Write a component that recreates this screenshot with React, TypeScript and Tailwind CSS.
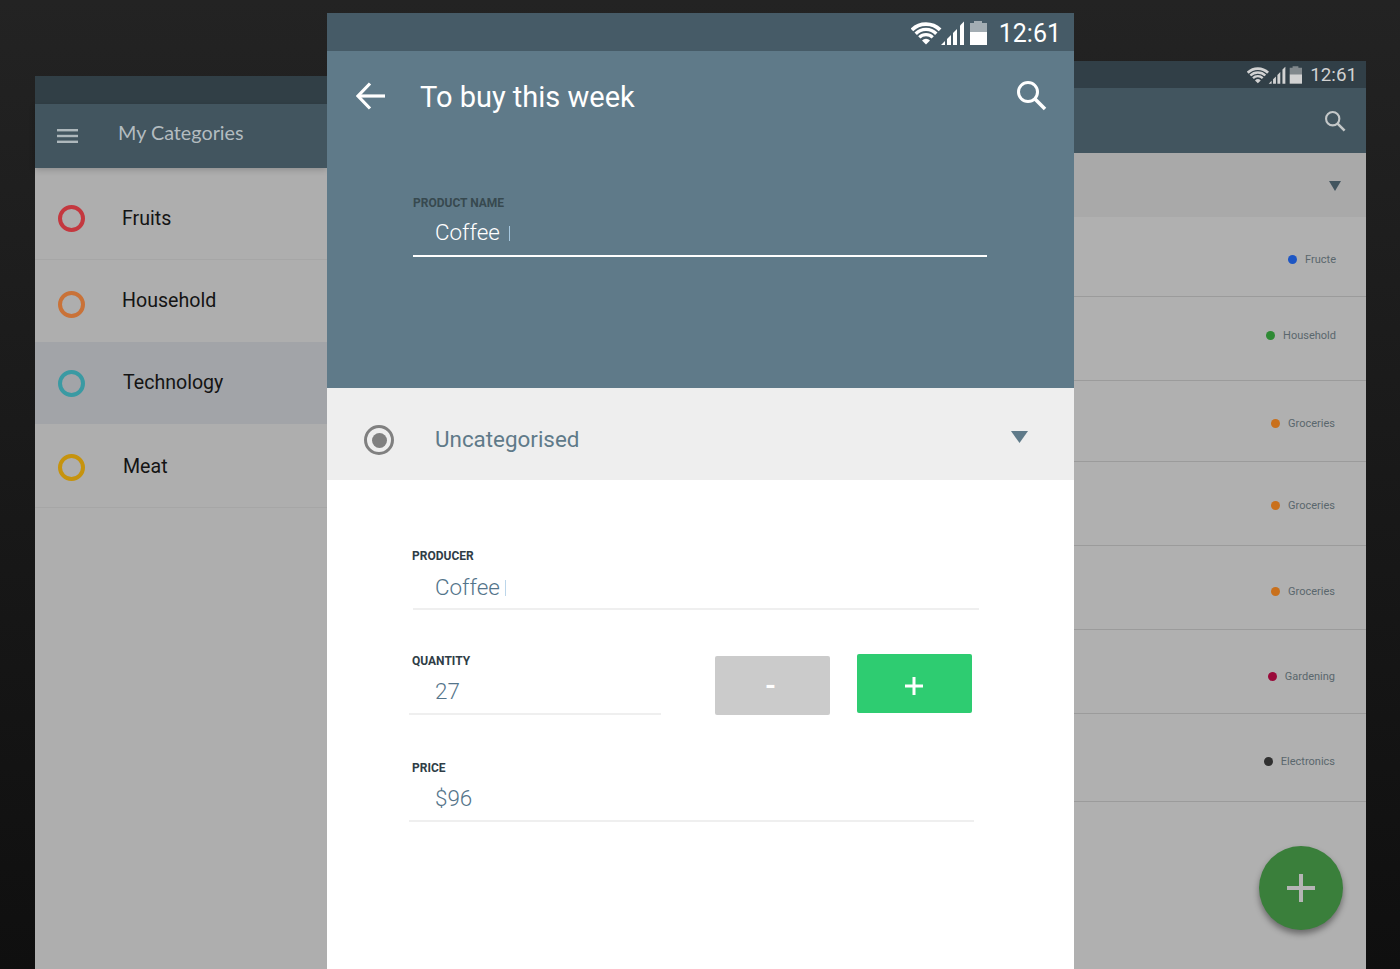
const roboto = "font-['Roboto',sans-serif]";

const categories = [
  { name: "Fruits", ring: "border-[#c4383f]", row: "h-[92px] pl-[23px] pt-[37px] border-b border-[#a6a6a6]", gap: "gap-[37px]", bg: "", text: "" },
  { name: "Household", ring: "border-[#c97238]", row: "h-[82px] pl-[23px] pt-[31px]", gap: "gap-[37px]", bg: "", text: "-mt-[4px]" },
  { name: "Technology", ring: "border-[#3a9aa3]", row: "h-[82px] pl-[23px] pt-[28px]", gap: "gap-[38px]", bg: "bg-[#a2a4a8]", text: "-mt-[1px]" },
  { name: "Meat", ring: "border-[#c6930e]", row: "h-[84px] pl-[23px] pt-[30px] border-b border-[#a6a6a6]", gap: "gap-[38px]", bg: "", text: "-mt-[1px]" },
];

const tags = [
  { name: "Fructe", dot: "bg-[#1d56c4]", row: "h-[80px] pt-[34px] pr-[30px]" },
  { name: "Household", dot: "bg-[#2f8a35]", row: "h-[84px] pt-[30px] pr-[30px]" },
  { name: "Groceries", dot: "bg-[#c9701c]", row: "h-[81px] pt-[34px] pr-[31px]" },
  { name: "Groceries", dot: "bg-[#c9701c]", row: "h-[84px] pt-[35px] pr-[31px]" },
  { name: "Groceries", dot: "bg-[#c9701c]", row: "h-[84px] pt-[37px] pr-[31px]" },
  { name: "Gardening", dot: "bg-[#9a0a3a]", row: "h-[84px] pt-[38px] pr-[31px]" },
  { name: "Electronics", dot: "bg-[#303030]", row: "h-[88px] pt-[39px] pr-[31px]" },
];

function StatusIcons({ className }: { className: string }) {
  return (
    <svg viewBox="0 0 76 24" className={className} fill="currentColor">
      <g fill="none" stroke="currentColor">
        <path d="M.9 8.9A20 20 0 0 1 29.1 8.9" strokeWidth="3.8" />
        <path d="M4.7 12.7A14.5 14.5 0 0 1 25.3 12.7" strokeWidth="3.4" />
        <path d="M8.3 16.3A9.5 9.5 0 0 1 21.7 16.3" strokeWidth="3.2" />
      </g>
      <path d="M15 23.5 11 19.5A5.7 5.7 0 0 1 19 19.5Z" />
      <path d="M30 24 34 20V24Z" />
      <path d="M36 18 40 14V24H36Z" />
      <path d="M42 12 46 8V24H42Z" />
      <path d="M49 4.5 53 .5V24H49Z" />
      <path d="M63 0H71V2H76V11H59V2H63Z" opacity="0.5" />
      <path d="M59 11H76V24H59Z" />
    </svg>
  );
}

function SearchIcon({ className }: { className: string }) {
  return (
    <svg viewBox="0 0 30 30" className={className} fill="none" stroke="currentColor">
      <circle cx="11" cy="11" r="9.5" strokeWidth="3" />
      <path d="M18 18 28 28" strokeWidth="3.6" />
    </svg>
  );
}

function Field({ label, value, caret, gap }: { label: string; value: string; caret?: boolean; gap: string }) {
  return (
    <div>
      <div className={`${roboto} h-4 text-[12px] leading-4 font-bold text-[#2f3d46]`}>{label}</div>
      <div className={`${roboto} ${gap} h-8 pl-[23px] flex items-center text-[22.4px] font-light text-[#54748a]`}>
        {value}
        {caret && <span className="ml-[5px] h-[16px] w-px bg-[#bcd6ea]" />}
      </div>
    </div>
  );
}

function CategoriesScreen() {
  return (
    <div className="mt-[76px] w-[292px] h-[893px] flex flex-col bg-[#aeaeae] shrink-0">
      <div className="h-[28px] bg-[#313f46]" />
      <header className="h-[64px] bg-[#42555f] flex items-center pl-[22px] shadow-[0_2px_6px_rgba(0,0,0,0.18)]">
        <svg viewBox="0 0 21 14" className="w-[21px] h-[14px]" fill="#aeb8bc">
          <rect width="21" height="2.4" />
          <rect y="5.8" width="21" height="2.4" />
          <rect y="11.6" width="21" height="2.4" />
        </svg>
        <h1 className="ml-[40px] mb-[6px] font-['Lato',sans-serif] text-[19.8px] text-[#b3bcc0]">My Categories</h1>
      </header>
      {categories.map((c) => (
        <div key={c.name} className={`${c.row} ${c.bg} ${c.gap} flex items-start`}>
          <span className={`${c.ring} w-[27px] h-[27px] rounded-full border-[4px] shrink-0`} />
          <span className={`${roboto} ${c.text} text-[19.6px] leading-[27px] text-[#141414]`}>{c.name}</span>
        </div>
      ))}
    </div>
  );
}

function EditScreen() {
  return (
    <main className="mt-[13px] w-[747px] h-[956px] flex flex-col bg-white shrink-0">
      <div className="h-[38px] bg-[#465b67] flex justify-end items-center pr-[13px] text-white">
        <StatusIcons className="w-[76px] h-[24px] mt-[1px]" />
        <span className={`${roboto} ml-[12px] mt-[2px] text-[25px] leading-none`}>12:61</span>
      </div>
      <section className="h-[337px] bg-[#5f7a89] text-white">
        <div className="h-[60px] mt-[15px] flex items-center pl-[29px] pr-[27px]">
          <svg viewBox="0 0 29 28" className="w-[29px] h-[28px]" fill="none" stroke="white" strokeWidth="3.2">
            <path d="M2 14H29" />
            <path d="M14 1.5 2 14 14 26.5" />
          </svg>
          <h1 className={`${roboto} ml-[35px] mt-[3px] text-[29px] flex-1`}>To buy this week</h1>
          <SearchIcon className="w-[30px] h-[30px]" />
        </div>
        <div className="mt-[69px] ml-[86px] w-[574px] border-b-2 border-white h-[62px]">
          <div className={`${roboto} h-4 text-[12px] leading-4 font-bold text-[#37494f]`}>PRODUCT NAME</div>
          <div className={`${roboto} mt-[6px] h-[32px] pl-[22px] flex items-center text-[22.4px] font-light`}>
            Coffee
            <span className="ml-[9px] h-[15px] w-px bg-[#a6c8e0]" />
          </div>
        </div>
      </section>
      <div className="h-[92px] bg-[#eeeeee] flex items-center pt-[12px] pl-[37px] pr-[46px]">
        <span className="w-[30px] h-[30px] rounded-full border-[3px] border-[#808080] flex items-center justify-center">
          <span className="w-[15px] h-[15px] rounded-full bg-[#808080]" />
        </span>
        <span className={`${roboto} ml-[41px] flex-1 text-[22.4px] text-[#5f7a89]`}>Uncategorised</span>
        <svg viewBox="0 0 17 12" className="w-[17px] h-[12px] mb-[6px]" fill="#5f7a89">
          <path d="M0 0H17L8.5 12Z" />
        </svg>
      </div>
      <div className="pl-[85px]">
        <div className="mt-[68px] w-[567px]">
          <Field label="PRODUCER" value="Coffee" caret gap="mt-2" />
          <div className="mt-[4px] ml-[1px] h-[2px] bg-[#efefef]" />
        </div>
        <div className="mt-[43px] flex items-start">
          <div className="w-[249px]">
            <Field label="QUANTITY" value="27" gap="mt-[7px]" />
            <div className="mt-[5px] -ml-[3px] h-[2px] bg-[#efefef]" />
          </div>
          <button className="mt-[3px] ml-[54px] w-[115px] h-[59px] rounded-[2px] bg-[#cbcbcb] pr-[4px] text-white text-[28px] font-bold font-['Roboto',sans-serif] flex items-center justify-center">
            -
          </button>
          <button className="mt-[1px] ml-[27px] w-[115px] h-[59px] rounded-[2px] bg-[#2ecc71] flex items-center justify-center">
            <svg viewBox="0 0 18 18" className="mt-[4px] -ml-[2px] w-[18px] h-[18px]" fill="white">
              <path d="M7.5 0H10.5V7.5H18V10.5H10.5V18H7.5V10.5H0V7.5H7.5Z" />
            </svg>
          </button>
        </div>
        <div className="mt-[45px] w-[562px]">
          <Field label="PRICE" value="$96" gap="mt-[7px]" />
          <div className="mt-[5px] -ml-[3px] h-[2px] bg-[#efefef]" />
        </div>
      </div>
    </main>
  );
}

function ListScreen() {
  return (
    <div className="mt-[61px] w-[292px] h-[908px] flex flex-col bg-[#b0b0b0] shrink-0 relative">
      <div className="h-[27px] bg-[#313f47] flex justify-end items-center pr-[9px] text-[#d2d2d2]">
        <StatusIcons className="w-[55px] h-[18px] mt-[1px]" />
        <span className={`${roboto} ml-[8px] mt-[2px] text-[18.8px] leading-none`}>12:61</span>
      </div>
      <header className="h-[65px] bg-[#42555f] flex items-center justify-end pr-[20px] text-[#c4c8c9]">
        <SearchIcon className="w-[21px] h-[21px] mt-[1px]" />
      </header>
      <div className="h-[64px] bg-[#a9a9a9] flex items-center justify-end pr-[25px]">
        <svg viewBox="0 0 12 10" className="mt-[1px] w-[12px] h-[10px]" fill="#42555f">
          <path d="M0 0H12L6 10Z" />
        </svg>
      </div>
      {tags.map((t, i) => (
        <div key={i} className={`${t.row} border-b border-[#9b9b9b] flex justify-end items-start`}>
          <div className="flex items-center gap-[8px] h-4">
            <span className={`${t.dot} w-[9px] h-[9px] rounded-full`} />
            <span className={`${roboto} mt-[1px] text-[11px] leading-4 text-[#5a676d]`}>{t.name}</span>
          </div>
        </div>
      ))}
      <button className="absolute left-[185px] top-[785px] w-[84px] h-[84px] rounded-full bg-[#3a7f3b] flex items-center justify-center shadow-[0_4px_6px_rgba(0,0,0,0.4)]">
        <svg viewBox="0 0 28 28" className="w-[28px] h-[28px]" fill="#b5b5b5">
          <path d="M12 0H16V12H28V16H16V28H12V16H0V12H12Z" />
        </svg>
      </button>
    </div>
  );
}

export default function App() {
  return (
    <div className="h-[969px] overflow-hidden flex pl-[35px] bg-gradient-to-b from-[#232323] to-[#0f0f0f]">
      <CategoriesScreen />
      <EditScreen />
      <ListScreen />
    </div>
  );
}
